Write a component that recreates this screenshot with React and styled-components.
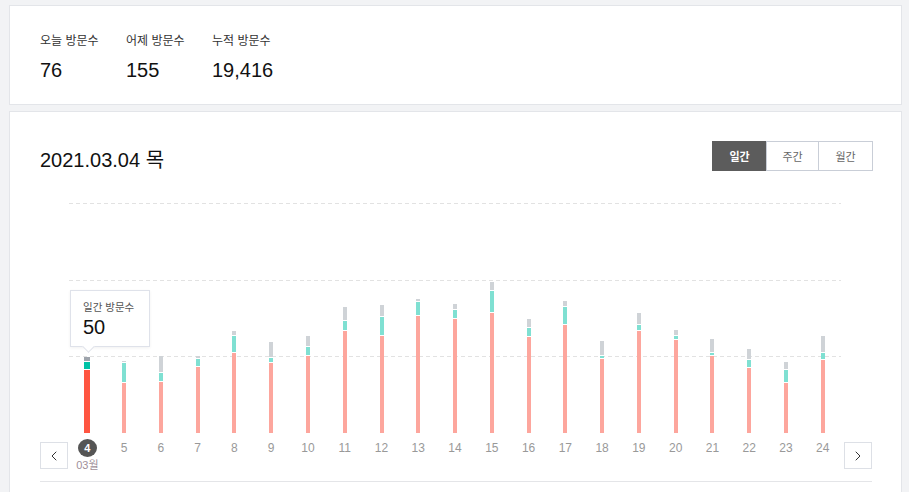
import React from "react";
import styled, { createGlobalStyle } from "styled-components";
import { ChevronLeft, ChevronRight } from "lucide-react";

const Global = createGlobalStyle`
  html, body { margin: 0; padding: 0; background: #f2f3f5; }
  body { font-family: "Liberation Sans", "Noto Sans CJK KR", sans-serif; color: #222; }
  * { box-sizing: border-box; }
`;

const Page = styled.div`
  padding: 5px 7px 0 9px;
  display: flex;
  flex-direction: column;
  gap: 6px;
`;

const Card = styled.section`
  background: #fff;
  border: 1px solid #e3e5e9;
`;

const SummaryCard = styled(Card)`
  display: flex;
  padding: 27px 30px 22px;
  height: 100px;
`;

const Stat = styled.div`
  width: 86px;
  display: flex;
  flex-direction: column;
  gap: 9px;
`;

const StatLabel = styled.div`
  font-size: 12px;
  line-height: 16px;
  color: #333;
  white-space: nowrap;
`;

const StatValue = styled.div`
  font-size: 20px;
  line-height: 24px;
  color: #111;
`;

const ChartCard = styled(Card)`
  padding: 29px 29px 30px 30px;
`;

const Header = styled.div`
  display: flex;
  justify-content: space-between;
  align-items: flex-start;
  height: 30px;
`;

const Title = styled.h2`
  margin: 4px 0 0;
  font-size: 20px;
  line-height: 30px;
  font-weight: 400;
  color: #111;
`;

const Segmented = styled.div`
  display: flex;
  margin-right: -1px;
`;

const SegButton = styled.button`
  width: ${(p) => p.$w}px;
  height: 30px;
  border: 1px solid ${(p) => (p.$active ? "#5c5c5c" : "#c9ced7")};
  margin-left: -1px;
  background: ${(p) => (p.$active ? "#5c5c5c" : "#fff")};
  color: ${(p) => (p.$active ? "#fff" : "#666")};
  font-family: inherit;
  font-size: 11px;
  font-weight: ${(p) => (p.$active ? 700 : 400)};
  padding: 0;
  cursor: pointer;
`;

const Plot = styled.div`
  position: relative;
  margin: 32px 31px 0 29px;
  height: 230px;
`;

const Grid = styled.svg`
  position: absolute;
  inset: 0;
  width: 100%;
  height: 100%;
`;

const Bars = styled.div`
  position: relative;
  display: flex;
  align-items: flex-end;
  height: 100%;
`;

const Col = styled.div`
  flex: 1;
  display: flex;
  justify-content: center;
`;

const Stack = styled.div`
  width: ${(p) => (p.$active ? 6 : 4)}px;
  display: flex;
  flex-direction: column;
  gap: 1px;
`;

const Seg = styled.div`
  background: ${(p) => p.$c};
`;

const Tooltip = styled.div`
  position: absolute;
  left: 1px;
  top: 87px;
  width: 80px;
  height: 57px;
  background: #fff;
  border: 1px solid #dfe2ea;
  box-shadow: 0 1px 3px rgba(0, 0, 0, 0.06);
  padding: 9px 0 0 12px;
  z-index: 2;
  &::after {
    content: "";
    position: absolute;
    left: 13px;
    bottom: -5px;
    width: 8px;
    height: 8px;
    background: #fff;
    border-right: 1px solid #dfe2ea;
    border-bottom: 1px solid #dfe2ea;
    transform: rotate(45deg);
  }
`;

const TipLabel = styled.div`
  font-size: 10.5px;
  line-height: 14px;
  color: #555;
  white-space: nowrap;
`;

const TipValue = styled.div`
  font-size: 20px;
  line-height: 24px;
  color: #111;
  margin-top: 1px;
`;

const Footer = styled.div`
  display: grid;
  grid-template-columns: 29px 1fr 31px;
  height: 49px;
  padding-top: 6px;
  border-bottom: 1px solid #e4e5e8;
`;

const NavButton = styled.button`
  width: 28px;
  height: 27px;
  margin-top: 3px;
  justify-self: ${(p) => (p.$right ? "end" : "start")};
  border: 1px solid #dde0e6;
  background: #fff;
  color: #333;
  display: flex;
  align-items: center;
  justify-content: center;
  padding: 0;
`;

const Labels = styled.div`
  display: flex;
`;

const LabelCell = styled.div`
  flex: 1;
  display: flex;
  flex-direction: column;
  align-items: center;
`;

const DayText = styled.div`
  height: 18px;
  line-height: 18px;
  font-size: 12px;
  color: #999;
`;

const DayBadge = styled.div`
  width: 19px;
  height: 18px;
  border-radius: 50%;
  background: #555;
  color: #fff;
  font-size: 11px;
  font-weight: 700;
  line-height: 18px;
  text-align: center;
`;

const Month = styled.div`
  font-size: 11px;
  line-height: 16px;
  color: #a08f99;
  white-space: nowrap;
`;

const data = [
  [4, 63, 7, 4],
  [5, 50, 19, 1],
  [6, 51, 8, 16],
  [7, 66, 7, 2],
  [8, 80, 16, 4],
  [9, 70, 4, 15],
  [10, 77, 8, 10],
  [11, 102, 9, 13],
  [12, 97, 18, 11],
  [13, 117, 13, 2],
  [14, 114, 8, 5],
  [15, 120, 21, 8],
  [16, 96, 8, 8],
  [17, 108, 17, 5],
  [18, 74, 2, 14],
  [19, 102, 5, 11],
  [20, 93, 3, 5],
  [21, 77, 2, 13],
  [22, 65, 7, 10],
  [23, 50, 12, 7],
  [24, 73, 6, 16],
];

export default function App() {
  return (
    <>
      <Global />
      <Page>
        <SummaryCard>
          <Stat>
            <StatLabel>오늘 방문수</StatLabel>
            <StatValue>76</StatValue>
          </Stat>
          <Stat>
            <StatLabel>어제 방문수</StatLabel>
            <StatValue>155</StatValue>
          </Stat>
          <Stat>
            <StatLabel>누적 방문수</StatLabel>
            <StatValue>19,416</StatValue>
          </Stat>
        </SummaryCard>
        <ChartCard>
          <Header>
            <Title>2021.03.04 목</Title>
            <Segmented>
              <SegButton $active $w={55}>일간</SegButton>
              <SegButton $w={53}>주간</SegButton>
              <SegButton $w={55}>월간</SegButton>
            </Segmented>
          </Header>
          <Plot>
            <Grid preserveAspectRatio="none">
              {[0.5, 77.5, 153.5].map((y) => (
                <line key={y} x1="0" x2="100%" y1={y} y2={y} stroke="#e2e2e2" strokeWidth="1" strokeDasharray="4 3" />
              ))}
            </Grid>
            <Bars>
              {data.map(([d, p, t, g], i) => {
                const active = i === 0;
                return (
                  <Col key={d}>
                    <Stack $active={active}>
                      <Seg $c={active ? "#9ea4ac" : "#cfd3d7"} style={{ height: g }} />
                      <Seg $c={active ? "#00c2a6" : "#7fe0d2"} style={{ height: t }} />
                      <Seg $c={active ? "#ff5541" : "#fda69d"} style={{ height: p }} />
                    </Stack>
                  </Col>
                );
              })}
            </Bars>
            <Tooltip>
              <TipLabel>일간 방문수</TipLabel>
              <TipValue>50</TipValue>
            </Tooltip>
          </Plot>
          <Footer>
            <NavButton aria-label="이전">
              <ChevronLeft size={16} strokeWidth={1.5} />
            </NavButton>
            <Labels>
              {data.map(([d], i) => (
                <LabelCell key={d}>
                  {i === 0 ? <DayBadge>{d}</DayBadge> : <DayText>{d}</DayText>}
                  {i === 0 && <Month>03월</Month>}
                </LabelCell>
              ))}
            </Labels>
            <NavButton $right aria-label="다음">
              <ChevronRight size={16} strokeWidth={1.5} />
            </NavButton>
          </Footer>
        </ChartCard>
      </Page>
    </>
  );
}
